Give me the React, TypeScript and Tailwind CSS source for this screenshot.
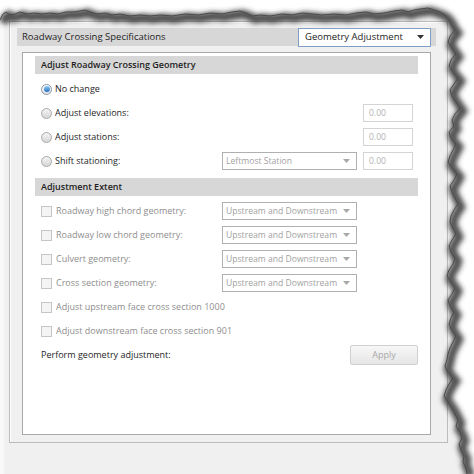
import React from "react";

const TOP: number[][] = [
  [0, 20], [3, 14], [6, 12], [10, 15], [15, 14], [20, 12], [27, 14], [34, 13], [42, 14], [50, 13],
  [58, 14], [66, 12], [74, 12], [80, 11], [85, 10], [90, 12], [97, 14], [105, 13], [112, 15], [120, 14],
  [130, 16], [140, 15], [150, 16], [160, 15], [172, 16], [185, 14], [198, 15], [210, 13], [222, 14],
  [232, 12], [240, 11], [246, 13], [252, 16], [260, 15], [270, 16], [282, 14], [292, 15], [302, 13],
  [312, 14], [322, 15], [334, 14], [346, 15], [356, 13], [366, 12], [374, 14], [384, 13], [394, 11],
  [402, 10], [408, 12], [414, 10], [420, 9], [428, 8], [434, 10], [440, 12], [445, 15],
];

const RIGHT: number[][] = [
  [449, 20], [452, 26], [455, 30], [450, 36], [448, 42], [452, 48], [456, 54], [451, 60], [449, 66],
  [453, 72], [458, 78], [454, 84], [450, 90], [452, 96], [456, 102], [460, 108], [455, 114], [452, 120],
  [454, 126], [449, 132], [451, 138], [456, 144], [453, 150], [450, 156], [448, 162], [452, 168],
  [457, 174], [454, 180], [450, 186], [452, 192], [455, 198], [458, 204], [454, 210], [451, 216],
  [450, 222], [453, 228], [456, 234], [452, 240], [449, 246], [451, 252], [455, 258], [453, 264],
  [449, 270], [447, 276], [451, 282], [455, 288], [452, 294], [448, 300], [450, 306], [454, 312],
  [451, 318], [449, 324], [452, 330], [456, 336], [453, 342], [450, 348], [448, 354], [447, 360],
  [445, 366], [448, 372], [453, 378], [449, 384], [446, 390], [444, 396], [448, 402], [452, 408],
  [455, 414], [458, 420], [456, 426], [460, 432], [462, 438], [459, 444], [461, 450], [464, 456],
  [463, 462], [466, 468], [467, 474],
];

function TornEdges() {
  const line = [...TOP, ...RIGHT].map((p) => p.join(",")).join(" ");
  const region = `M0,0 L${line.replace(/ /g, " L")} L474,474 L474,0 Z`;
  return (
    <svg className="pointer-events-none absolute left-0 top-0" width="474" height="474" viewBox="0 0 474 474">
      <defs>
        <filter id="blur" x="-10%" y="-10%" width="120%" height="120%">
          <feGaussianBlur stdDeviation="2.8" />
        </filter>
      </defs>
      <path d={region} fill="#ffffff" />
      <polyline
        points={line}
        fill="none"
        stroke="#333333"
        strokeOpacity="0.85"
        strokeWidth="9"
        filter="url(#blur)"
        transform="translate(3,3)"
      />
      <polyline points={line} fill="none" stroke="#4a4a4a" strokeWidth="1" />
    </svg>
  );
}

function Radio({ checked }: { checked?: boolean }) {
  if (checked) {
    return (
      <span className="flex h-[11px] w-[11px] shrink-0 items-center justify-center rounded-full border border-[#8a9cb0] bg-gradient-to-b from-white to-[#dcdcdc]">
        <span className="h-[6px] w-[6px] rounded-full bg-gradient-to-b from-[#8fcdf6] to-[#1f6fbf]" />
      </span>
    );
  }
  return <span className="h-[11px] w-[11px] shrink-0 rounded-full border border-[#a9a9a9] bg-gradient-to-b from-[#f4f4f4] to-[#d6d6d6]" />;
}

function Checkbox() {
  return <span className="h-[11px] w-[11px] shrink-0 border border-[#c6c6c6] bg-[#f4f4f4]" />;
}

function Arrow({ color }: { color: string }) {
  return (
    <svg width="7" height="4" viewBox="0 0 7 4" className="shrink-0">
      <path d="M0 0 H7 L3.5 4 Z" fill={color} />
    </svg>
  );
}

function Select({ value }: { value: string }) {
  return (
    <div className="flex h-[18px] w-[135px] shrink-0 items-center justify-between whitespace-nowrap border border-[#b0b0b0] bg-white pl-[3px] pr-[6px] text-[8.6px] text-[#a2a2a2]">
      <span>{value}</span>
      <Arrow color="#a8a8a8" />
    </div>
  );
}

function NumBox() {
  return (
    <div className="ml-[6px] flex h-[18px] w-[50px] shrink-0 items-center border border-[#d4d4d4] bg-white pl-[5px] text-[8.6px] text-[#b4b4b4]">
      0.00
    </div>
  );
}

function RadioRow({ label, checked, select, box }: { label: string; checked?: boolean; select?: string; box?: boolean }) {
  return (
    <div className="flex h-[24px] items-center pl-[6px]">
      <div className="flex w-[181px] shrink-0 items-center gap-[3px] whitespace-nowrap">
        <Radio checked={checked} />
        <span>{label}</span>
      </div>
      <div className="w-[135px] shrink-0">{select && <Select value={select} />}</div>
      {box && <NumBox />}
    </div>
  );
}

function CheckRow({ label, select }: { label: string; select?: boolean }) {
  return (
    <div className="flex h-[24px] items-center pl-[6px]">
      <div className="flex w-[181px] shrink-0 items-center gap-[4px] whitespace-nowrap text-[#8e8e8e]">
        <Checkbox />
        <span>{label}</span>
      </div>
      {select && <Select value="Upstream and Downstream" />}
    </div>
  );
}

function SectionBar({ title }: { title: string }) {
  return (
    <div className="flex h-[18px] items-center whitespace-nowrap bg-[#d7d7d7] pl-[6px] font-semibold text-[#1e1e1e]">
      {title}
    </div>
  );
}

export default function App() {
  return (
    <div className="relative h-[474px] w-[474px] overflow-hidden bg-[#f0f0f0] font-['Open_Sans',sans-serif] text-[9px] text-[#1e1e1e]">
      <div className="flex h-full">
        <div className="w-[4px] bg-[#f8f8f8]" />
        <div className="pl-[5px] pt-[21px]">
          <div className="h-[422px] w-[439px] border border-[#bcbcbc] pl-[7px] pr-[11px] pt-[6px] shadow-[inset_1px_1px_0_#ffffff]">
            <div className="flex h-[18px] items-center justify-between whitespace-nowrap bg-[#d7d7d7] pl-[5px] pr-[5px] text-[9.5px]">
              <span>Roadway Crossing Specifications</span>
              <div className="flex h-[19px] w-[133px] items-center justify-between border border-[#7f9fc6] bg-white pl-[6px] pr-[6px] text-[#222]">
                <span>Geometry Adjustment</span>
                <Arrow color="#333" />
              </div>
            </div>

            <div className="ml-[5px] mt-[6px] h-[383px] w-[409px] border border-[#a9a9a9] bg-white px-[12px] pt-[3px]">
              <SectionBar title="Adjust Roadway Crossing Geometry" />
              <div className="mt-[3px]">
                <RadioRow label="No change" checked />
                <RadioRow label="Adjust elevations:" box />
                <RadioRow label="Adjust stations:" box />
                <RadioRow label="Shift stationing:" select="Leftmost Station" box />
              </div>
              <div className="mt-[5px]">
                <SectionBar title="Adjustment Extent" />
              </div>
              <div className="mt-[3px]">
                <CheckRow label="Roadway high chord geometry:" select />
                <CheckRow label="Roadway low chord geometry:" select />
                <CheckRow label="Culvert geometry:" select />
                <CheckRow label="Cross section geometry:" select />
                <CheckRow label="Adjust upstream face cross section 1000" />
                <CheckRow label="Adjust downstream face cross section 901" />
                <div className="flex h-[24px] items-center justify-between whitespace-nowrap pl-[6px]">
                  <span>Perform geometry adjustment:</span>
                  <button className="h-[20px] w-[68px] rounded-[2px] border border-[#d0d0d0] bg-gradient-to-b from-[#f7f7f7] to-[#e6e6e6] text-[#a8a8a8]">
                    Apply
                  </button>
                </div>
              </div>
            </div>
          </div>
        </div>
      </div>
      <TornEdges />
    </div>
  );
}
